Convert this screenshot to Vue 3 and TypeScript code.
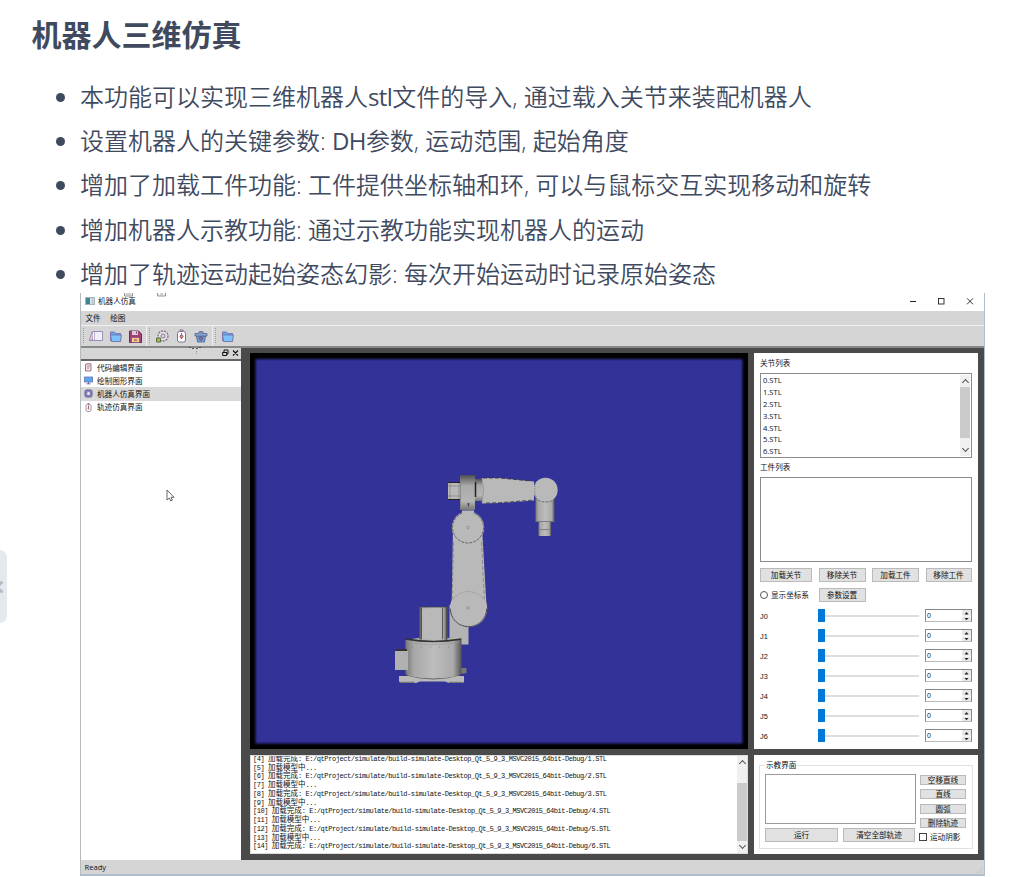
<script setup lang="ts">
import { ref } from 'vue'

const features: string[] = [
  '本功能可以实现三维机器人stl文件的导入, 通过载入关节来装配机器人',
  '设置机器人的关键参数: DH参数, 运动范围, 起始角度',
  '增加了加载工件功能: 工件提供坐标轴和环, 可以与鼠标交互实现移动和旋转',
  '增加机器人示教功能: 通过示教功能实现机器人的运动',
  '增加了轨迹运动起始姿态幻影: 每次开始运动时记录原始姿态',
]
// Latin words get their own weight and tracking inside the Chinese sentences.
const splitLatin = (text: string): string[] => text.split(/([A-Za-z]+)/)

const pages = [
  { name: '代码编辑界面', icon: 'code' },
  { name: '绘制图形界面', icon: 'screen' },
  { name: '机器人仿真界面', icon: 'robot' },
  { name: '轨迹仿真界面', icon: 'track' },
]
const activePage = ref('机器人仿真界面')

const links: string[] = [0, 1, 2, 3, 4, 5, 6].map((n) => `${n}.STL`)
const joints: string[] = ['J0', 'J1', 'J2', 'J3', 'J4', 'J5', 'J6']
const root = 'E:/qtProject/simulate/build-simulate-Desktop_Qt_5_9_3_MSVC2015_64bit-Debug/'

interface LogLine { no: number; label: string; tail: string }
const logs: LogLine[] = Array.from({ length: 11 }, (_, i) => {
  const no = i + 4
  return no % 2 === 0
    ? { no, label: '加载完成', tail: `: ${root}${no / 2 - 1}.STL` }
    : { no, label: '加载模型中', tail: '...' }
})
</script>

<template>
  <main class="page">
    <h2>机器人三维仿真</h2>
    <ul class="features">
      <li v-for="f in features" :key="f"><span><template v-for="(part, i) in splitLatin(f)" :key="i"><b v-if="i % 2">{{ part }}</b><template v-else>{{ part }}</template></template></span></li>
    </ul>

    <section class="window">
      <header class="titlebar">
        <svg class="appicon" width="10" height="8" viewBox="0 0 10 8"><rect x=".5" y=".5" width="9" height="7" fill="#dfe9ec" stroke="#a5b4bd" /><rect x="1" y="1" width="4" height="6" fill="#3d8793" /><path d="M6.5 2h2M6.5 4h2M6.5 6h2" stroke="#7e9aa4" stroke-width=".8" /></svg>
        <span>机器人仿真</span>
        <svg class="controls" width="66" height="10" viewBox="0 0 66 10" fill="none" stroke="#222"><path d="M1 5.5h6" /><rect x="29.5" y="2.500" width="5.500" height="5.500" stroke-width=".9" /><path d="M58 2.300l6 6M64 2.300l-6 6" stroke-width=".9" /></svg>
        <svg class="ghost" width="46" height="4" viewBox="0 0 46 4" fill="#f4f4f4" stroke="#777" stroke-width=".8"><path d="M1.500 0v3h8V0M34.500 0v3h8V0" /><path d="M3 1h5M37 1h3" stroke="#999" /></svg>
      </header>
      <nav class="menubar"><span>文件</span><span>绘图</span></nav>
      <div class="toolbar">
        <svg width="160" height="24" viewBox="81 325 160 24">
          <g stroke="#a1a1a1" stroke-dasharray="1 1"><path d="M83.500 328v16M149.500 328v16M215.500 328v16" /></g>
          <path d="M146.500 326v20M212.500 326v20" stroke="#efefef" />
          <path d="M92.500 331.500h10v9h-13z" fill="#eef1fb" stroke="#8a7bab" stroke-width=".8" /><path d="M89.500 340l2.500-8 .5 8z" fill="#ddd5ed" stroke="#98799f" stroke-width=".6" /><path d="M92.500 331.500h2v9" fill="none" stroke="#a08bbb" stroke-width=".6" />
          <g fill="#62adf2" stroke="#7265a6" stroke-width=".8"><path d="M110.500 332h4l1 1.500h5v7h-10z" /><path d="M110.500 335h11l-1 6.500h-9z" fill="#7dc3fa" /></g>
          <path d="M129.500 331h9l3 3v8.500h-12z" fill="#9c4278" stroke="#653255" /><path d="M132 331h6v4h-6z" fill="#e1cbd9" /><path d="M131.500 337.500h8v5h-8z" fill="#f5ca8d" stroke="#92416e" stroke-width=".7" /><path d="M136.500 331.500v2M134 340h3" stroke="#77375b" />
          <circle cx="163" cy="336" r="5" fill="#e4dfe8" stroke="#806c8e" stroke-width="1.300" stroke-dasharray="2 1" /><circle cx="163" cy="336" r="2" fill="#ddd" stroke="#8b778f" /><path d="M156.500 338h4v4h-4z" fill="#a6bd49" stroke="#5c7042" />
          <rect x="177.500" y="331.500" width="8" height="10.500" rx="2" fill="#fff" stroke="#85708f" /><path d="M180 331v-1h3v1" fill="none" stroke="#85708f" /><path d="M181.500 333v6" stroke="#b35266" /><circle cx="181.500" cy="336.500" r="1.500" fill="#ed965b" stroke="#935078" />
          <path d="M196.500 336h9l-1 6h-7z" fill="#6b9fd6" stroke="#496195" stroke-width=".8" /><path d="M195 333.500h12v2.500h-12z" fill="#7fa7d8" stroke="#596489" stroke-width=".8" /><path d="M198 333.500l1.500-2h3l1.500 2" fill="#8198c7" stroke="#596489" stroke-width=".8" /><circle cx="201" cy="338.500" r="1.600" fill="#be687e" stroke="#554a83" stroke-width=".8" />
          <path d="M222.500 332h4l1 1.500h5v7h-10z" fill="#62adf2" stroke="#7265a6" stroke-width=".8" /><path d="M222.500 335h11l-1 6.500h-9z" fill="#7dc3fa" stroke="#7265a6" stroke-width=".8" />
        </svg>
      </div>

      <div class="work">
        <aside class="dock">
          <div class="dockhead">
            <svg width="18" height="8" viewBox="0 0 18 8" fill="none" stroke="#111"><path d="M2 3V1h4v4H5" /><path d="M.7 3.500h4v3h-4z" /><path d="M.5 3.500h4.500M11 1.500l5 5M16 1.500l-5 5" stroke-width="1.100" /></svg>
          </div>
          <ul class="tree">
            <li v-for="p in pages" :key="p.name" :class="{ active: p.name === activePage }" @click="activePage = p.name">
              <svg width="9" height="9" viewBox="0 0 9 9" fill="none">
                <template v-if="p.icon === 'code'"><path d="M2 .8h5v6.700L6 8H1.500V2z" fill="#efe1e5" stroke="#9d6077" stroke-width=".9" /><path d="M3 3h3M3 5h2" stroke="#b98b98" /></template>
                <template v-else-if="p.icon === 'screen'"><rect x=".4" y="1" width="8.200" height="5" fill="#5aa7f1" stroke="#6679b8" stroke-width=".8" /><path d="M2.500 7.800h4M4.500 6v2" stroke="#776c9c" /></template>
                <template v-else-if="p.icon === 'robot'"><rect x="1" y="1" width="7" height="7" rx="1.500" fill="#8e8bc4" stroke="#5a5799" stroke-width="1" /><circle cx="4.500" cy="4.500" r="1.900" fill="#eeeefa" stroke="#68649d" stroke-width=".7" /></template>
                <template v-else><rect x="2" y="1.500" width="5" height="7" rx="1.500" fill="#fff" stroke="#89758f" stroke-width=".8" /><path d="M3.500.7h2M4.500 2.500v4" stroke="#935c74" /><circle cx="4.500" cy="5.500" r="1" fill="#d7825e" /></template>
              </svg>
              <span>{{ p.name }}</span>
            </li>
          </ul>
          <svg class="specks" width="14" height="8" viewBox="0 0 14 8" stroke="#444"><path d="M0 .5h2M3 1.500h2M7 1.500h2M10 .5h2" stroke-width=".9" /><path d="M7.500 4v1M7.500 6v1" stroke="#888" stroke-width=".8" /></svg>
        </aside>

        <div class="center">
          <div class="view">
            <svg width="498" height="396" viewBox="250 353 498 396">
              <defs>
                <linearGradient id="cyl"><stop offset="0" stop-color="#777" /><stop offset=".15" stop-color="#a8a8a8" /><stop offset=".5" stop-color="#bdbdbd" /><stop offset=".85" stop-color="#aaa" /><stop offset="1" stop-color="#555" /></linearGradient>
                <linearGradient id="ring" x2="0" y2="1"><stop offset="0" stop-color="#555" /><stop offset=".3" stop-color="#aaa" /><stop offset=".75" stop-color="#b5b5b5" /><stop offset="1" stop-color="#777" /></linearGradient>
                <filter id="edge"><feGaussianBlur stdDeviation="1.300" /></filter>
              </defs>
              <rect x="250" y="353" width="498" height="396" fill="#000" />
              <rect x="255.500" y="359" width="487" height="384.500" fill="#333399" filter="url(#edge)" />
              <g fill="#b9b9b9">
                <path d="M449.500 605h19v39.500h-19z" fill="#b4b4b4" />
                <path d="M399 676h8l3-2h46l3 2h5V682l-2 1h-13l-4-1.500h-25l-4 1.500h-15l-2-1.500z" /><path d="M406 675q27 8 54 0M399.500 682.300h15M449 682.300h13" stroke="#555" fill="none" stroke-width=".8" />
                <path d="M460 668h6.500v5l-5 1z" fill="#777" />
                <path d="M405.500 640q28-6 56 0v34q-6 4-28 4t-28-4z" fill="url(#cyl)" /><path d="M405.500 639q28 5 56 0" fill="none" stroke="#333" stroke-width="1.500" /><path d="M407 642q26 5 53 0" fill="none" stroke="#999" stroke-width=".6" /><path d="M412 647h44" stroke="#777" stroke-width=".6" stroke-dasharray="1 8" />
                <path d="M395 651h13v19h-13z" fill="#b1b1b1" /><path d="M395 651l2-2h10v2z" fill="#333" />
                <path d="M419.500 607h28v33h-28z" fill="url(#cyl)" /><path d="M422 608.500h20v31h-20z" /><path d="M419.500 607h28M420 607v32M421.500 608v31M442.500 608v31M446.500 608v31" stroke="#444" stroke-width=".8" />
                <path d="M453 527h29l4.500 79h-34.800z" />
                <path d="M453.500 542l-1.500 60M481.500 542l3 60" stroke="#777" stroke-width=".7" stroke-dasharray="4 2" />
                <circle cx="468" cy="527.500" r="16.200" /><circle cx="468" cy="527.500" r="15.500" fill="none" stroke="#444" stroke-width=".7" stroke-dasharray="3 1" />
                <circle cx="468.500" cy="608.500" r="18.700" /><path d="M450.300 608.500a18.200 18.200 0 0 0 36.400 0" fill="none" stroke="#444" stroke-width=".9" /><path d="M453 599q15-15 31 0" fill="none" stroke="#888" stroke-width=".6" stroke-dasharray="2 1" />
                <circle cx="468" cy="527.500" r="1.300" fill="none" stroke="#777" stroke-width=".5" /><circle cx="468.300" cy="608" r="1.300" fill="none" stroke="#777" stroke-width=".5" />
                <path d="M448 482.500h13v17h-13z" /><path d="M448 482.500h13M448 499.500h13" stroke="#222" stroke-width="1.200" /><path d="M448 486h12M448 496h12M450 483v16M459 483v16" stroke="#777" stroke-width=".6" />
                <path d="M460 475.500h15v34.500h-15z" fill="url(#ring)" /><path d="M460 475.800h15" stroke="#555" /><path d="M460.500 477v33" stroke="#777" stroke-width=".6" /><path d="M467 504h3M468.500 503v4" stroke="#444" stroke-width=".8" /><path d="M462 510.500h12v3h-12z" />
                <path d="M475 479h8v22h-8z" fill="url(#ring)" /><path d="M475.500 482v15" stroke="#222" stroke-width="1.500" />
                <path d="M482 478h18l34 3.500v19L500 503l-18 .5z" /><path d="M482 478q3 13 0 25" fill="none" stroke="#888" stroke-width=".7" /><path d="M483 478h16l32 3M486 503l14-.3 34-2.700" fill="none" stroke="#333" stroke-width=".8" stroke-dasharray="4 2" />
                <path d="M535.500 494h19v27.500h-19z" fill="url(#cyl)" /><path d="M538.500 521.500H551V536h-12.500z" fill="url(#cyl)" /><path d="M538.500 529.500H551M535.500 521.500h19" stroke="#777" stroke-width=".8" />
                <circle cx="545.500" cy="490" r="12.200" /><path d="M535 497q4 5 11 5t10-5" fill="none" stroke="#555" stroke-width=".7" stroke-dasharray="3 1" /><path d="M535.500 484q-2 7 1 13" fill="none" stroke="#666" stroke-width=".7" stroke-dasharray="1 1" />
              </g>
            </svg>
          </div>
          <div class="log">
            <div class="loglines">
              <p v-for="l in logs" :key="l.no">[{{ l.no }}] <b>{{ l.label }}</b>{{ l.tail }}</p>
            </div>
            <div class="scroll logscroll"><i class="up"></i><em></em><i class="down"></i></div>
          </div>
        </div>

        <div class="right">
          <div class="config">
            <label class="caption">关节列表</label>
            <div class="listbox links">
              <div><p v-for="s in links" :key="s">{{ s }}</p></div>
              <div class="scroll"><i class="up"></i><em></em><i class="down"></i></div>
            </div>
            <label class="caption second">工件列表</label>
            <div class="listbox"></div>
            <div class="btnrow"><button>加载关节</button><button>移除关节</button><button>加载工件</button><button>移除工件</button></div>
            <div class="btnrow option"><span class="radio"><i></i>显示坐标系</span><button>参数设置</button></div>
            <div v-for="j in joints" :key="j" class="joint">
              <span>{{ j }}</span>
              <div class="slider"><i></i></div>
              <div class="spin"><span>0</span><svg width="9" height="12" viewBox="0 0 9 12"><path d="M0 0h9v12H0z" fill="#e8e8e8" /><path d="M0 6h9" stroke="#fff" /><path d="M2.500 4.500L4.500 2l2 2.500zM2.500 8L4.500 10.300l2-2.300z" fill="#222" /></svg></div>
            </div>
          </div>
          <div class="teach">
            <fieldset>
              <legend>示教界面</legend>
              <div class="teachgrid">
                <div class="left">
                  <div class="moves"></div>
                  <div class="actions"><button>运行</button><button>清空全部轨迹</button></div>
                </div>
                <div class="side">
                  <button>空移直线</button><button>直线</button><button>圆弧</button><button>删除轨迹</button>
                  <span class="check"><i></i>运动阴影</span>
                </div>
              </div>
            </fieldset>
          </div>
        </div>
      </div>
      <footer class="status"><span>Ready</span><svg width="8" height="8" viewBox="0 0 8 8" stroke="#b5b5b5" stroke-dasharray="1 1"><path d="M1 7l6-6M4 7l3-3" /></svg></footer>
      <svg class="cursor" width="9" height="13" viewBox="0 0 9 13"><path d="M1 1v10l2.300-2 1.500 3 1.500-.8L5 8.300h3z" fill="#fff" stroke="#555" stroke-width=".9" /></svg>
    </section>

    <div class="handle"><svg width="4" height="14" viewBox="0 0 4 14" fill="none" stroke="#b4b9c8" stroke-width="3" stroke-linecap="round"><path d="M1.500 2.500L-3 7l4.500 4.500" /></svg></div>
  </main>
</template>

<style>
body { margin: 0; background: #fff; overflow: hidden; }
</style>

<style scoped>
* { box-sizing: border-box; }
.page { position: relative; width: 1027px; height: 877px; overflow: hidden; color: #3f4a5f; font-family: "Open Sans", "Noto Sans CJK SC", sans-serif; }
h2 { margin: 0; padding: 14px 0 0 31.500px; height: 76px; font-size: 30px; line-height: 42px; font-weight: 700; }
ul, p { margin: 0; padding: 0; list-style: none; }
.features { height: 217px; padding-left: 56px; }
.features li { display: flex; align-items: center; height: 44.200px; font-size: 24px; font-weight: 350; line-height: 34px; white-space: nowrap; }
.features span { padding-bottom: 2px; }
.features b { font-weight: 400; letter-spacing: -.6px; }
.features li::before { content: ""; width: 9px; height: 9px; margin: -1px 15px 0 0; border-radius: 50%; background: #3f4a5f; }

.window { position: relative; display: flex; flex-direction: column; margin-left: 80px; width: 905px; height: 583px; border-left: 1px solid #b5babd; border-right: 1px solid #b3bdca; border-bottom: 2px solid #b0bdcf; background: #d5d5d5; color: #111; font: 7.600px/10px "Open Sans", "Noto Sans CJK SC", sans-serif; white-space: nowrap; }
.titlebar { display: flex; align-items: center; height: 18px; padding: 0 9px 2px 4px; gap: 3px; background: #fff; }
.titlebar .controls { margin-left: auto; }
.ghost { position: absolute; left: 42px; top: 0; }
.menubar { display: flex; height: 14px; gap: 9.500px; padding-left: 4.500px; line-height: 14px; }
.toolbar { height: 23px; border-top: 1px solid #f1f1f1; border-bottom: 2px solid #858a89; }
.toolbar svg { display: block; margin-top: -1px; }
.work { display: flex; height: 512px; background: #494a49; }
.dock { position: relative; width: 160px; display: flex; flex-direction: column; background: #fff; }
.dockhead { display: flex; justify-content: flex-end; height: 13px; padding: 1px 1px 0; border-bottom: 2px solid #646464; background: #d5d5d5; }
.specks { position: absolute; left: 108px; top: -1px; }
.tree li { display: flex; align-items: center; gap: 4px; height: 13.200px; padding-left: 3px; }
.tree li.active { background: #d9d9d9; }
.center { width: 498px; margin-left: 9px; padding-top: 5px; }
.view { height: 396px; }
.view svg { display: block; }
.log { display: flex; height: 99px; margin-top: 6px; background: #fff; border: 1px solid #ddd; }
.loglines { display: flex; flex-direction: column; justify-content: flex-end; flex: 1; overflow: hidden; padding: 0 0 3px 2px; }
.loglines p { flex: none; height: 8.750px; line-height: 8.750px; font-family: "Liberation Mono", "Noto Sans CJK SC", monospace; font-size: 7px; letter-spacing: -.44px; white-space: pre; }
.loglines b { font-family: "Noto Sans CJK SC", sans-serif; font-size: 7.500px; font-weight: 400; letter-spacing: 0; }
.scroll { display: flex; flex-direction: column; width: 10px; background: #f0f0f0; }
.scroll i { position: relative; height: 12px; flex: none; }
.scroll i::after { content: ""; display: block; width: 4px; height: 4px; margin: 5px 3px 0; border: solid #555; border-width: 1px 0 0 1px; transform: rotate(45deg); }
.scroll i.down::after { margin-top: 2px; transform: rotate(225deg); }
.scroll em { height: 51px; margin-bottom: auto; background: #cbcbcb; }
.scroll.logscroll em { margin: auto 0 0; height: 58px; }

.right { width: 224px; margin-left: 6px; padding-top: 5px; }
.config { height: 396px; padding: 5px 6px 0; background: #fff; }
.caption { display: block; height: 15px; line-height: 11px; }
.caption.second { margin-top: 4.500px; }
.listbox { display: flex; justify-content: space-between; height: 85px; border: 1px solid #8b8b8b; padding: 1px; overflow: hidden; }
.listbox.links { height: 84.500px; }
.listbox p { height: 11.900px; line-height: 11.900px; padding-left: 1px; font-size: 7.600px; }
button { display: flex; align-items: center; justify-content: center; padding: 0; border: 1px solid #bababa; border-radius: 0; background: #e1e1e1; color: #111; font: inherit; line-height: 10px; white-space: nowrap; }
.btnrow { display: grid; grid-template-columns: 52px 47px 47px 46px; column-gap: 6.500px; height: 14px; margin-top: 6px; }
.btnrow.option { margin: 6px 0 3.500px; }
.radio { display: flex; align-items: center; gap: 3px; }
.radio i { width: 8px; height: 8px; border: 1px solid #555; border-radius: 50%; }
.joint { display: grid; grid-template-columns: 58px 101px 47px; align-items: center; height: 20px; column-gap: 0; }
.joint .spin { margin-left: 6px; width: 47px; }
.joint > span { padding-top: 1px; font: 7.400px "Liberation Sans", sans-serif; }
.slider { display: flex; align-items: center; height: 13px; }
.slider i { width: 7px; height: 13px; background: #0078d7; }
.slider::after { content: ""; flex: 1; height: 2px; background: #dedede; }
.spin { display: flex; justify-content: space-between; align-items: center; height: 13px; border: 1px solid #888; border-bottom-color: #bbb; padding-left: 1px; font: 7px/11px "Liberation Sans", sans-serif; overflow: hidden; }

.teach { height: 99px; margin-top: 6px; padding: 5px; background: #fff; }
fieldset { height: 89px; min-width: 0; margin: 0; padding: 0 5px; border: 1px solid #e1e1e1; }
legend { height: 10px; padding: 0 1px; line-height: 10px; }
.teachgrid { display: grid; grid-template-columns: 151px 47px; column-gap: 4px; padding-top: 4px; }
.moves { height: 50px; border: 1px solid #9b9b9b; }
.actions { display: grid; grid-template-columns: 73px 72px; gap: 5px; margin-top: 4px; }
.actions button { height: 14px; }
.side { padding-top: 1px; }
.side button { width: 46px; height: 10px; margin-bottom: 4.400px; line-height: 8px; overflow: hidden; }
.check { display: flex; align-items: center; gap: 3px; height: 10px; margin: -1px 0 0 -1px; }
.check i { width: 8px; height: 8px; border: 1px solid #444; }
.status { display: flex; justify-content: space-between; align-items: flex-end; height: 14px; padding-left: 3.500px; line-height: 14px; }
.cursor { position: absolute; left: 85px; top: 196px; }
.handle { position: absolute; left: 0; top: 550px; width: 7px; height: 73px; display: flex; align-items: center; border-radius: 0 7px 7px 0; background: #e4e9ee; }
</style>
